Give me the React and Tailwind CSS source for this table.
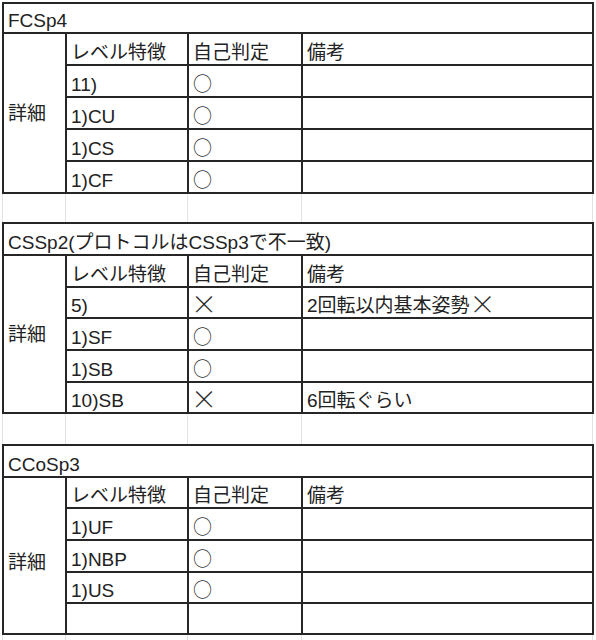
import React from "react";

function Cell({ children, className = "" }) {
  return (
    <div className={"bg-white flex items-end pl-[4px] pb-[2px] whitespace-nowrap " + className}>
      <span className="leading-[19px]">{children}</span>
    </div>
  );
}

function X({ className = "" }) {
  return (
    <span className={"inline-block translate-y-[2px] font-['Noto_Sans_CJK_JP',sans-serif] text-[26px] leading-[19px] text-[#2a2a2a] font-light " + className}>
      ×
    </span>
  );
}

function Mark({ v }) {
  if (!v) return null;
  if (v === "×") return <X className="-ml-[2px]" />;
  return <span className="font-['Noto_Sans_CJK_JP',sans-serif] text-[#333]">{v}</span>;
}

function Table({ title, rows, rowClass, detailClass = "" }) {
  return (
    <div className={"ml-[2px] w-[592px] grid grid-cols-[61px_120px_112px_289px] gap-[2px] p-[2px] bg-[#262626] " + rowClass}>
      <Cell className="col-span-4">{title}</Cell>
      <div className={"row-span-5 bg-white flex items-center pl-[4px] " + detailClass}>
        <span className="leading-[19px]">詳細</span>
      </div>
      <Cell>レベル特徴</Cell>
      <Cell>自己判定</Cell>
      <Cell>備考</Cell>
      {rows.map((r, i) => (
        <React.Fragment key={i}>
          <Cell>{r[0]}</Cell>
          <Cell>
            <Mark v={r[1]} />
          </Cell>
          <Cell>{r[2]}</Cell>
        </React.Fragment>
      ))}
    </div>
  );
}

function Gap({ className }) {
  return (
    <div className={"flex " + className}>
      <div className="w-[3px] border-r border-[#e3e3e3]" />
      <div className="w-[63px] border-r border-[#e3e3e3]" />
      <div className="w-[122px] border-r border-[#e3e3e3]" />
      <div className="w-[114px] border-r border-[#e3e3e3]" />
      <div className="w-[291px] border-r border-[#e3e3e3]" />
    </div>
  );
}

export default function App() {
  return (
    <div className="w-[596px] h-[640px] bg-white overflow-hidden text-[19px] text-[#222] font-['Liberation_Sans','Noto_Sans_CJK_JP',sans-serif]">
      <div className="h-[2px]" />
      <Table
        title="FCSp4"
        rowClass="grid-rows-[28px_30px_30px_30px_30px_30px]"
        rows={[
          ["11)", "○", ""],
          ["1)CU", "○", ""],
          ["1)CS", "○", ""],
          ["1)CF", "○", ""],
        ]}
      />
      <Gap className="h-[28px]" />
      <Table
        title="CSSp2(プロトコルはCSSp3で不一致)"
        rowClass="grid-rows-[30px_30px_29px_30px_30px_29px]"
        rows={[
          ["5)", "×", <>2回転以内基本姿勢<X /></>],
          ["1)SF", "○", ""],
          ["1)SB", "○", ""],
          ["10)SB", "×", "6回転ぐらい"],
        ]}
      />
      <Gap className="h-[30px]" />
      <Table
        title="CCoSp3"
        rowClass="grid-rows-[30px_29px_30px_30px_29px_29px]"
        detailClass="pt-[14px]"
        rows={[
          ["1)UF", "○", ""],
          ["1)NBP", "○", ""],
          ["1)US", "○", ""],
          ["", "", ""],
        ]}
      />
      <Gap className="h-[6px]" />
    </div>
  );
}
